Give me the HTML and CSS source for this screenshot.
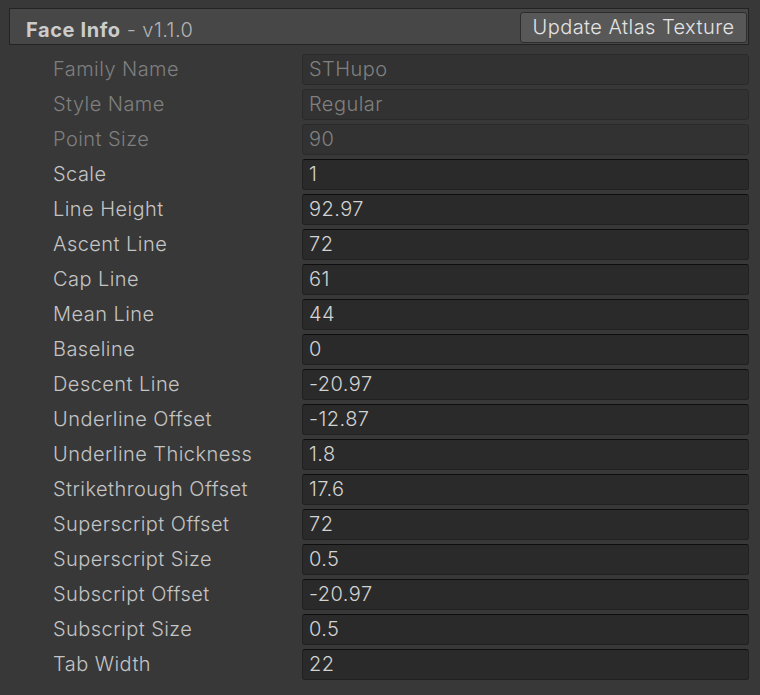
FILE: index.html
```html
<!DOCTYPE html>
<html>
<head>
<meta charset="utf-8">
<link rel="stylesheet" href="styles.css">
</head>
<body>
<div class="inspector">
  <div class="header">
    <div class="title"><span class="title-main">Face Info</span><span class="title-ver"> - v1.1.0</span></div>
    <button class="btn">Update Atlas Texture</button>
  </div>
  <div class="rows">
    <div class="row disabled"><span class="label">Family Name</span><div class="field">STHupo</div></div>
    <div class="row disabled"><span class="label">Style Name</span><div class="field">Regular</div></div>
    <div class="row disabled"><span class="label">Point Size</span><div class="field">90</div></div>
    <div class="row"><span class="label">Scale</span><div class="field">1</div></div>
    <div class="row"><span class="label">Line Height</span><div class="field">92.97</div></div>
    <div class="row"><span class="label">Ascent Line</span><div class="field">72</div></div>
    <div class="row"><span class="label">Cap Line</span><div class="field">61</div></div>
    <div class="row"><span class="label">Mean Line</span><div class="field">44</div></div>
    <div class="row"><span class="label">Baseline</span><div class="field">0</div></div>
    <div class="row"><span class="label">Descent Line</span><div class="field">-20.97</div></div>
    <div class="row"><span class="label">Underline Offset</span><div class="field">-12.87</div></div>
    <div class="row"><span class="label">Underline Thickness</span><div class="field">1.8</div></div>
    <div class="row"><span class="label">Strikethrough Offset</span><div class="field">17.6</div></div>
    <div class="row"><span class="label">Superscript Offset</span><div class="field">72</div></div>
    <div class="row"><span class="label">Superscript Size</span><div class="field">0.5</div></div>
    <div class="row"><span class="label">Subscript Offset</span><div class="field">-20.97</div></div>
    <div class="row"><span class="label">Subscript Size</span><div class="field">0.5</div></div>
    <div class="row"><span class="label">Tab Width</span><div class="field">22</div></div>
  </div>
</div>
</body>
</html>
```
FILE: styles.css
```css
html, body {
  margin: 0;
  padding: 0;
  background: #383838;
  width: 760px;
  height: 695px;
  overflow: hidden;
  font-family: Inter, "Noto Sans", sans-serif;
  font-size: 20px;
  font-weight: 350;
  letter-spacing: 0.45px;
}
.inspector {
  padding: 8px 0 0 9px;
  width: 740px;
}
.header {
  box-sizing: border-box;
  height: 37px;
  width: 740px;
  background: #474747;
  border: 1px solid #232323;
  display: flex;
  align-items: flex-start;
  justify-content: space-between;
}
.title {
  padding: 8px 0 0 16px;
  line-height: 26px;
  color: #c4c4c4;
}
.title-main {
  font-weight: 700;
  color: #cccccc;
  letter-spacing: 0.6px;
}
.title-ver {
  color: #b4b4b4;
}
.btn {
  box-sizing: border-box;
  margin: 3px 1px 0 0;
  height: 31px;
  width: 227px;
  padding: 0;
  background: #585858;
  border: 1px solid #2c2c2c;
  border-radius: 3px;
  color: #e4e4e4;
  font-family: Inter, "Noto Sans", sans-serif;
  font-size: 20px;
  font-weight: 350;
  letter-spacing: 0.45px;
  line-height: 27px;
}
.rows {
  padding-top: 9px;
  display: flex;
  flex-direction: column;
  gap: 4px;
}
.row {
  display: flex;
  align-items: center;
  height: 31px;
}
.label {
  width: 249px;
  padding-left: 44px;
  color: #c4c4c4;
  line-height: 29px;
}
.field {
  box-sizing: border-box;
  width: 447px;
  height: 31px;
  padding-left: 6px;
  background: #2a2a2a;
  border: 1px solid #212121;
  border-top-color: #0e0e0e;
  border-radius: 3px;
  color: #d2d2d2;
  line-height: 29px;
}
.disabled .label {
  color: #7f7f7f;
}
.disabled .field {
  background: #323232;
  border-color: #2a2a2a;
  color: #808080;
}
```
